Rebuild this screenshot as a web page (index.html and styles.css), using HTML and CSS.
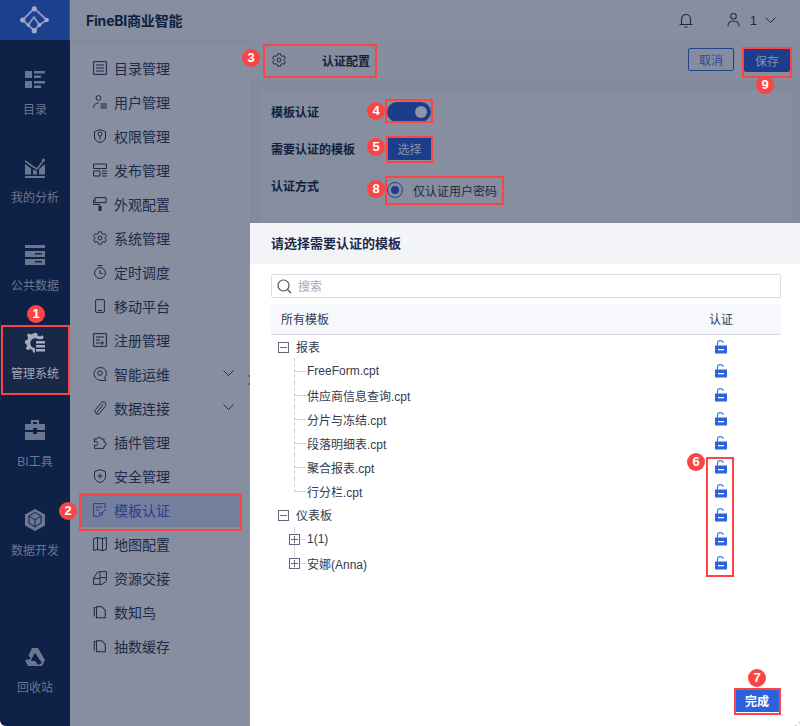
FILE: index.html
```html
<!DOCTYPE html>
<html lang="zh">
<head>
<meta charset="utf-8">
<title>FineBI</title>
<link rel="stylesheet" href="styles.css">
</head>
<body>
<svg class="defs" width="0" height="0">
  <symbol id="unlock" viewBox="0 0 14 14">
    <path d="M3.500 6V3C3.500 1.500 4.700.6 6.300.6S9 1.500 9.300 2.800" fill="none" stroke="#4f7ae6" stroke-width="1.200"/>
    <rect x="1" y="5.500" width="12" height="8" fill="#2c62dc"/>
    <rect x="4" y="9" width="6" height="1.300" fill="#fff"/>
  </symbol>
  <symbol id="doc" viewBox="0 0 16 16">
    <path d="M1.500 13V3H3M4 14.500V2H10L14 6V14.500Z" fill="none" stroke="currentColor" stroke-width="1.200"/>
  </symbol>
  <symbol id="gear" viewBox="0 0 14 14">
    <path d="M5.600.8H8.400L8.900 2.600 10.200 3.300 12 2.800 13.400 5.200 12.100 6.500V7.500L13.400 8.800 12 11.200 10.200 10.700 8.900 11.400 8.400 13.200H5.600L5.100 11.400 3.800 10.700 2 11.200.6 8.800 1.900 7.500V6.500L.6 5.200 2 2.800 3.800 3.300 5.100 2.600Z" fill="none" stroke="currentColor" stroke-width="1" stroke-linejoin="round"/>
    <circle cx="7" cy="7" r="2" fill="none" stroke="currentColor" stroke-width="1"/>
  </symbol>
</svg>
<div class="app">
  <aside class="rail">
    <div class="logo">
      <svg width="30" height="30" viewBox="0 0 30 30"><g fill="none" stroke="#8d9bc0" stroke-width="1.800"><path d="M2.700 15L14.300 3.300 26.700 15M2.700 15L14.300 25.700 19.300 20 26.700 15M8.300 20L14 12 19.300 20"/></g><g fill="#a0abc8"><circle cx="14.300" cy="3.800" r="2.600"/><circle cx="2.700" cy="15" r="2.600"/><circle cx="26.700" cy="15" r="2.200"/><circle cx="14.300" cy="25.700" r="2.600"/><circle cx="19.300" cy="20" r="2"/><circle cx="8.300" cy="20" r="1.800"/></g></svg>
    </div>
    <div class="rail-item r1">
      <svg width="20" height="18" viewBox="0 0 20 18"><path fill="#6b7690" d="M0 0h7v7H0zM0 10h7v7H0zM9 0h11v2.500H9zM9 4.500h7v2.500H9zM9 10h11v2.500H9zM9 14.500h7V17H9z"/></svg>
      <span>目录</span>
    </div>
    <div class="rail-item r2">
      <svg width="20" height="20" viewBox="0 0 20 20"><path fill="#6b7690" d="M0 18h20v2H0zM0 6l6 4.500V16.500H0zM8 11.500l4 1.500v3.500H8zM14 11l6-5v10.500h-6z"/><path d="M0 3l7 5 5 3L18.500 2.500" fill="none" stroke="#6b7690" stroke-width="1.600"/><circle cx="18.500" cy="2" r="1.500" fill="#6b7690"/></svg>
      <span>我的分析</span>
    </div>
    <div class="rail-item r3">
      <svg width="20" height="20" viewBox="0 0 20 20"><path fill="#6b7690" d="M0 0h20v3H0zM0 6h20v6H0zM0 14h20v6H0z"/><path fill="#0e2247" d="M10 8h7v1.500h-7zM10 16h7v1.500h-7z"/></svg>
      <span>公共数据</span>
    </div>
    <div class="rail-item r4">
      <svg width="20" height="20" viewBox="0 0 20 20"><path fill="#a3abbc" d="M9 0h3l.6 2.500 2.400 1 2.200-1.300 1.600 2-1.500 2h-4A5 5 0 1 0 9 15h1v4.500H8l-.6-2.500-2.400-1-2.200 1.300-2-2 1.300-2.200-1-2.400L0 10.500v-3l2.200-.6 1-2.400L1.900 2.300l2-2L6 1.600 8.400.6z"/><path fill="#a3abbc" d="M11 8h9v2.500h-9zM11 12h9v2.500h-9zM11 16h9v2.500h-9z"/></svg>
      <span>管理系统</span>
    </div>
    <div class="rail-item r5">
      <svg width="20" height="20" viewBox="0 0 20 20"><path fill="#6b7690" d="M6 0h8v4h-2V2H8v2H6zM0 4h20v6h-8V8H8v2H0zM0 12h8v2h4v-2h8v8H0z"/></svg>
      <span>BI工具</span>
    </div>
    <div class="rail-item r6">
      <svg width="20" height="22" viewBox="0 0 20 22"><path fill="#6b7690" d="M10 0l10 5.500v11L10 22 0 16.500v-11z"/><path fill="none" stroke="#0e2247" d="M4 7l6-3.500L16 7v7l-6 4-6-4zM4 7l6 4 6-4M10 11v7"/></svg>
      <span>数据开发</span>
    </div>
    <div class="rail-spacer"></div>
    <div class="rail-item r7">
      <svg width="20" height="18" viewBox="0 0 20 18"><path fill="#6b7690" d="M7 0h6l7 12-3 6H3l-3-6 6-1-2.500-3.500zM10 5l-3.500 6 3.500 2 4 5h-3l6-3z"/><path fill="#0e2247" d="M10 5l4 8H6z"/></svg>
      <span>回收站</span>
    </div>
  </aside>
  <div class="main">
    <header class="topbar">
      <strong class="brand">FineBI商业智能</strong>
      <div class="top-right">
        <svg width="14" height="15" viewBox="0 0 14 15"><path d="M2.500 11.500V6a4.500 4.500 0 0 1 9 0v5.500M.5 11.500h13M5.500 14h3" fill="none" stroke="#1d2a48" stroke-width="1.100"/></svg>
        <svg class="user-icon" width="13" height="16" viewBox="0 0 14 16"><circle cx="7" cy="4" r="3" fill="none" stroke="#1d2a48" stroke-width="1.100"/><path d="M1 15c0-4 2.500-6 6-6s6 2 6 6" fill="none" stroke="#1d2a48" stroke-width="1.100"/></svg>
        <span class="user-num">1</span>
        <svg width="11" height="6" viewBox="0 0 11 6"><path d="M.5.500l5 5 5-5" fill="none" stroke="#1d2a48" stroke-width="1"/></svg>
      </div>
    </header>
    <div class="body">
      <nav class="menu">
        <div class="menu-item"><svg class="mi" viewBox="0 0 14 14"><path d="M.6.600h12.800v12.800H.6zM3 4h8M3 7h8M3 10h8" class="ms"/></svg>目录管理</div>
        <div class="menu-item"><svg class="mi" viewBox="0 0 14 14"><circle cx="5.500" cy="3" r="2.400" class="ms"/><path d="M.6 13c0-3 1.500-5 5-5M7.500 9H14M7.500 11H14M7.500 13H14" class="ms"/></svg>用户管理</div>
        <div class="menu-item"><svg class="mi" viewBox="0 0 14 14"><path d="M7 .6l5.500 2v5.500C12.500 11 9.500 13 7 13.500 4.500 13 1.500 11 1.500 8.100V2.600z" class="ms"/><circle cx="7" cy="5" r="2" class="ms"/><path d="M7 7v3.500" class="ms"/></svg>权限管理</div>
        <div class="menu-item"><svg class="mi" viewBox="0 0 14 14"><path d="M.6 1h12.800v4.500H.6zM.6 8h6.400v5H.6zM9 8h5M9 10.500h5M9 13h5" class="ms"/></svg>发布管理</div>
        <div class="menu-item"><svg class="mi" viewBox="0 0 14 14"><path d="M2 .6h11v5H2zM2 3H.6v4.500h6V9" class="ms"/><path d="M5.500 9h3v5h-3z" fill="#1d2a48"/></svg>外观配置</div>
        <div class="menu-item"><svg class="mi"><use href="#gear"/></svg>系统管理</div>
        <div class="menu-item"><svg class="mi" viewBox="0 0 14 14"><circle cx="7" cy="8" r="5.400" class="ms"/><path d="M7 5v3.500h2.500M4.500.6h5" class="ms"/></svg>定时调度</div>
        <div class="menu-item"><svg class="mi" viewBox="0 0 14 14"><rect x="2.600" y=".6" width="8.800" height="12.800" rx="1" class="ms"/><path d="M5 11.500h4" class="ms"/></svg>移动平台</div>
        <div class="menu-item"><svg class="mi" viewBox="0 0 14 14"><path d="M.6.600h12.800v12.800H.6zM3 4h8M3 7h4M3 10h4M9 8v4M7.500 10h3.500" class="ms"/></svg>注册管理</div>
        <div class="menu-item has-arrow"><svg class="mi" viewBox="0 0 14 14"><path d="M7 .6a6 6 0 0 0-6 6c0 3.500 2.500 6 6 6.800h6L11.500 11A6 6 0 0 0 7 .6z" class="ms"/><circle cx="7" cy="6" r="2.300" class="ms"/></svg>智能运维<svg class="chev" viewBox="0 0 11 6"><path d="M.5.500l5 5 5-5" class="ms"/></svg></div>
        <div class="menu-item has-arrow"><svg class="mi" viewBox="0 0 14 14"><path d="M4 13.500L1.500 10l7-8.500c1-1 3.500-1 4 .5s.5 2-.5 3.500L6 13c-1 1-2.500 0-2-1.500l6-8" class="ms"/></svg>数据连接<svg class="chev" viewBox="0 0 11 6"><path d="M.5.500l5 5 5-5" class="ms"/></svg></div>
        <div class="menu-item"><svg class="mi" viewBox="0 0 14 14"><path d="M1 4h3a2 2 0 1 1 4 0h3v3a2 2 0 1 1 0 4v2.400H1.500V10a2 2 0 1 0 0-3z" class="ms"/></svg>插件管理</div>
        <div class="menu-item"><svg class="mi" viewBox="0 0 14 14"><path d="M7 .6l5.500 2v5.500C12.500 11 9.500 13 7 13.500 4.500 13 1.500 11 1.500 8.100V2.600zM7 4.500v5M4.500 7h5" class="ms"/></svg>安全管理</div>
        <div class="menu-item active"><svg class="mi" viewBox="0 0 14 14"><path d="M12 5V.6H.6v12.800H6M3 4h6M3 7h3" class="ms"/><circle cx="8" cy="11" r="1.600" class="ms"/><path d="M9 10l4-4" class="ms"/></svg>模板认证</div>
        <div class="menu-item"><svg class="mi" viewBox="0 0 14 14"><path d="M.6 1.500L4.500.6v11.900l-3.900 1zM4.500.6l5 1v12l-5-1.100zM9.500 1.600l3.900-1v11.900l-3.900 1.100z" class="ms"/></svg>地图配置</div>
        <div class="menu-item"><svg class="mi" viewBox="0 0 14 14"><path d="M7 .6h6.400v6H7zM.6 7.400h6.400v6H.6zM.6 7l4-6H7M13.400 7v3L9 13.400H7" class="ms"/></svg>资源交接</div>
        <div class="menu-item"><svg class="mi"><use href="#doc"/></svg>数知鸟</div>
        <div class="menu-item"><svg class="mi"><use href="#doc"/></svg>抽数缓存</div>
      </nav>
      <section class="content">
        <span class="handle"></span>
        <div class="config-head">
          <svg class="gear"><use href="#gear"/></svg>
          <strong class="config-title">认证配置</strong>
          <div class="head-actions">
            <button class="btn-cancel">取消</button>
            <button class="btn-save">保存</button>
          </div>
        </div>
        <div class="form">
          <div class="form-row">
            <label>模板认证</label>
            <span class="switch"><i></i></span>
          </div>
          <div class="form-row">
            <label>需要认证的模板</label>
            <button class="btn-select">选择</button>
          </div>
          <div class="form-row">
            <label>认证方式</label>
            <span class="radio"><i></i></span>
            <span class="radio-text">仅认证用户密码</span>
          </div>
        </div>
      </section>
    </div>
  </div>
</div>

<div class="dialog">
  <div class="dialog-head">请选择需要认证的模板</div>
  <div class="dialog-body">
    <div class="search">
      <svg width="15" height="15" viewBox="0 0 15 15"><circle cx="6.500" cy="6.500" r="5.500" fill="none" stroke="#4a5163" stroke-width="1.200"/><path d="M10.500 10.500l3.500 3.500" stroke="#4a5163" stroke-width="1.200"/></svg>
      <span>搜索</span>
    </div>
    <div class="table-head"><span>所有模板</span><span class="th-auth">认证</span></div>
    <div class="tree">
      <div class="row root"><span class="box minus"></span><span class="name">报表</span><svg class="lock"><use href="#unlock"/></svg></div>
      <div class="row leaf"><span class="name">FreeForm.cpt</span><svg class="lock"><use href="#unlock"/></svg></div>
      <div class="row leaf"><span class="name">供应商信息查询.cpt</span><svg class="lock"><use href="#unlock"/></svg></div>
      <div class="row leaf"><span class="name">分片与冻结.cpt</span><svg class="lock"><use href="#unlock"/></svg></div>
      <div class="row leaf"><span class="name">段落明细表.cpt</span><svg class="lock"><use href="#unlock"/></svg></div>
      <div class="row leaf"><span class="name">聚合报表.cpt</span><svg class="lock"><use href="#unlock"/></svg></div>
      <div class="row leaf last"><span class="name">行分栏.cpt</span><svg class="lock"><use href="#unlock"/></svg></div>
      <div class="row root"><span class="box minus"></span><span class="name">仪表板</span><svg class="lock"><use href="#unlock"/></svg></div>
      <div class="row sub"><span class="box plus"></span><span class="name">1(1)</span><svg class="lock"><use href="#unlock"/></svg></div>
      <div class="row sub"><span class="box plus"></span><span class="name">安娜(Anna)</span><svg class="lock"><use href="#unlock"/></svg></div>
    </div>
  </div>
  <div class="dialog-foot"><button class="btn-done">完成</button></div>
</div>

<div class="mark m1"></div><b class="badge b1">1</b>
<div class="mark m2"></div><b class="badge b2">2</b>
<div class="mark m3"></div><b class="badge b3">3</b>
<div class="mark m4"></div><b class="badge b4">4</b>
<div class="mark m5"></div><b class="badge b5">5</b>
<div class="mark m6"></div><b class="badge b6">6</b>
<div class="mark m7"></div><b class="badge b7">7</b>
<div class="mark m8"></div><b class="badge b8">8</b>
<div class="mark m9"></div><b class="badge b9">9</b>
</body>
</html>
```
FILE: styles.css
```css
* { box-sizing: border-box; }
html, body { margin: 0; padding: 0; }
body {
  width: 800px;
  height: 726px;
  position: relative;
  overflow: hidden;
  background: #fff;
  font-family: "Liberation Sans", "Noto Sans CJK SC", sans-serif;
  font-size: 12px;
  color: #1d2a48;
}
.defs { position: absolute; }
.app { display: flex; width: 800px; height: 726px; background: #868e9f; border-radius: 0 0 6px 6px; overflow: hidden; }

/* rail */
.rail { width: 70px; flex: none; background: #0e2247; display: flex; flex-direction: column; }
.logo { height: 40px; background: #1c3f8e; display: flex; align-items: center; justify-content: center; }
.rail-item { display: flex; flex-direction: column; align-items: center; color: #6b7690; }
.rail-item svg { display: block; flex: none; }
.rail-item span { line-height: 16px; white-space: nowrap; }
.rail-item.r1 { height: 88px; padding-top: 31px; }
.rail-item.r1 span { margin-top: 13px; }
.rail-item.r2 { height: 88px; padding-top: 30px; }
.rail-item.r2 span { margin-top: 12px; }
.rail-item.r3 { height: 109px; padding-top: 29px; }
.rail-item.r3 span { margin-top: 13px; }
.rail-item.r4 { height: 70px; padding-top: 8px; background: #182848; color: #a3abbc; }
.rail-item.r4 span { margin-top: 13px; }
.rail-item.r5 { height: 88px; padding-top: 25px; }
.rail-item.r5 span { margin-top: 14px; }
.rail-item.r6 { padding-top: 26px; }
.rail-item.r6 span { margin-top: 12px; }
.rail-spacer { flex: 1; }
.rail-item.r7 { height: 78px; }
.rail-item.r7 span { margin-top: 14px; }

/* main */
.main { flex: 1; min-width: 0; display: flex; flex-direction: column; }
.topbar { height: 40px; flex: none; display: flex; align-items: center; padding: 0 24px 0 16px; background: #868e9f; box-shadow: 0 1px 2px #7e8698; position: relative; }
.brand { font-size: 14px; font-weight: 700; color: #0f1f42; font-family: "Inter", "Noto Sans CJK SC", sans-serif; letter-spacing: -.2px; }
.top-right { margin-left: auto; display: flex; align-items: center; }
.top-right > svg:first-child { position: relative; left: -4px; }
.user-icon { margin-left: 30px; }
.user-num { margin: 0 8px 0 10px; font-size: 13px; font-family: "Liberation Sans", sans-serif; }
.body { flex: 1; display: flex; min-height: 0; }

/* menu */
.menu { width: 180px; flex: none; padding: 11px 9px 0 10px; }
.menu-item { height: 34px; display: flex; align-items: center; padding-left: 13px; font-size: 14px; color: #1d2a48; position: relative; }
.mi { width: 14px; height: 14px; margin-right: 7px; flex: none; color: #1d2a48; }
.ms { fill: none; stroke: currentColor; stroke-width: 1; }
.chev { width: 11px; height: 6px; position: absolute; right: 7px; top: 13px; color: #1d2a48; }
.menu-item.active { background: #737f9c; color: #25408e; }
.menu-item.active .mi { color: #25408e; }

/* content */
.content { flex: 1; min-width: 0; background: #828a9c; display: flex; flex-direction: column; position: relative; }
.handle { position: absolute; left: -2px; top: 335px; width: 3px; height: 10px; border-top: 2px solid #5a6378; border-bottom: 2px solid #5a6378; }
.config-head { height: 40px; flex: none; display: flex; align-items: center; padding: 0 10px 0 22px; background: #858d9f; }
.gear { width: 14px; height: 14px; flex: none; color: #1d2a48; }
.config-title { margin-left: 36px; font-size: 12px; font-weight: 700; color: #101f40; }
.head-actions { margin-left: auto; display: flex; gap: 10px; }
.btn-cancel, .btn-save, .btn-select, .btn-done { font: inherit; font-size: 12px; padding: 0; cursor: default; border-radius: 2px; }
.btn-cancel { width: 46px; height: 23px; background: transparent; border: 1px solid #21438f; color: #324a8c; }
.btn-save { width: 46px; height: 24px; background: #1b3d8c; border: 0; color: #8590a8; }
.form { margin: 10px 9px 0 11px; padding: 3px 10px 0; height: 133px; background: #868e9f; }
.form-row { display: flex; align-items: center; height: 37px; }
.form-row label { width: 117px; flex: none; font-weight: 700; color: #101f40; }
.switch { width: 44px; height: 20px; margin-left: -1px; border-radius: 10px; background: #1b3d8c; display: flex; align-items: center; justify-content: flex-end; padding-right: 4px; }
.switch i { width: 12px; height: 12px; border-radius: 50%; background: #8d95a8; display: block; }
.btn-select { width: 43px; height: 23px; background: #1b3d8c; border: 0; color: #8590a8; border-radius: 0; }
.radio { width: 16px; height: 16px; margin: 9px 0 0 -1px; border: 1px solid #21438f; border-radius: 50%; display: flex; align-items: center; justify-content: center; }
.radio i { width: 8px; height: 8px; border-radius: 50%; background: #1b3d8c; display: block; }
.radio-text { margin: 9px 0 0 10px; color: #1d2a48; }

/* dialog over the page */
.dialog { position: absolute; left: 250px; top: 223px; width: 550px; height: 503px; background: #fff; border-radius: 0 0 6px 0; display: flex; flex-direction: column; }
.dialog-head { height: 41px; flex: none; background: #f2f4f8; padding: 0 0 2px 21px; display: flex; align-items: center; font-size: 13px; font-weight: 700; color: #1d2a48; }
.dialog-body { flex: 1; padding: 10px 19px 0 21px; min-height: 0; }
.search { height: 24px; border: 1px solid #d9dce3; border-radius: 2px; display: flex; align-items: center; padding-left: 5px; color: #a4a9b5; }
.search span { margin: 0 0 2px 6px; }
.table-head { height: 31px; margin-top: 6px; padding: 0 0 2px 10px; background: #f7f8fc; border-bottom: 1px solid #d5dae6; display: flex; align-items: center; color: #333b4f; }
.th-auth { margin-left: auto; margin-right: 48px; }
.row { height: 24px; display: flex; align-items: center; position: relative; color: #333b4f; }
.lock { width: 14px; height: 14px; position: absolute; left: 443px; top: 5px; }
.box { width: 11px; height: 11px; border: 1px solid #5f6778; position: relative; flex: none; display: block; background: #fff; z-index: 1; }
.box::before { content: ""; position: absolute; left: 1px; top: 4px; width: 7px; height: 1px; background: #5f6778; }
.plus::after { content: ""; position: absolute; left: 4px; top: 1px; width: 1px; height: 7px; background: #5f6778; }
.root { padding-left: 7px; }
.root .name { margin-left: 7px; padding-bottom: 2px; }
.leaf { padding-left: 36px; }
.leaf::before { content: ""; position: absolute; left: 23px; top: -1px; height: 25px; border-left: 1px dashed #c9cdd6; }
.leaf::after { content: ""; position: absolute; left: 24px; top: 12px; width: 11px; border-top: 1px dashed #c9cdd6; }
.leaf.last::before { height: 14px; }
.sub { padding-left: 18px; }
.sub .name { margin-left: 7px; }
.sub::before { content: ""; position: absolute; left: 23px; top: 0; height: 24px; border-left: 1px solid #d5d8df; }
.sub::after { content: ""; position: absolute; left: 29px; top: 12px; width: 6px; border-top: 1px solid #d5d8df; }
.sub:last-child::before { height: 12px; }
.dialog-foot { height: 38px; flex: none; display: flex; justify-content: flex-end; padding: 0 21px 0 0; }
.btn-done { width: 44px; height: 24px; background: #2c62dc; color: #fff; border: 0; font-weight: 700; border-radius: 0; }

/* annotations */
.mark { position: absolute; border: 2px solid #fb4545; }
.m1 { left: 1px; top: 325px; width: 69px; height: 70px; }
.m2 { left: 79px; top: 494px; width: 163px; height: 37px; }
.m3 { left: 263px; top: 44px; width: 114px; height: 34px; }
.m4 { left: 385px; top: 99px; width: 48px; height: 24px; }
.m5 { left: 386px; top: 136px; width: 47px; height: 27px; }
.m6 { left: 706px; top: 457px; width: 28px; height: 120px; }
.m7 { left: 734px; top: 688px; width: 47px; height: 27px; }
.m8 { left: 385px; top: 176px; width: 119px; height: 29px; }
.m9 { left: 742px; top: 47px; width: 50px; height: 31px; }
.badge { position: absolute; width: 18px; height: 18px; border-radius: 50%; background: #fb4545; color: #fff; font: 700 13px/18px "Liberation Sans", sans-serif; text-align: center; }
.b1 { left: 27px; top: 305px; }
.b2 { left: 59px; top: 502px; }
.b3 { left: 242px; top: 49px; }
.b4 { left: 367px; top: 102px; }
.b5 { left: 367px; top: 138px; }
.b6 { left: 687px; top: 453px; }
.b7 { left: 748px; top: 669px; }
.b8 { left: 367px; top: 180px; }
.b9 { left: 756px; top: 76px; }
```
